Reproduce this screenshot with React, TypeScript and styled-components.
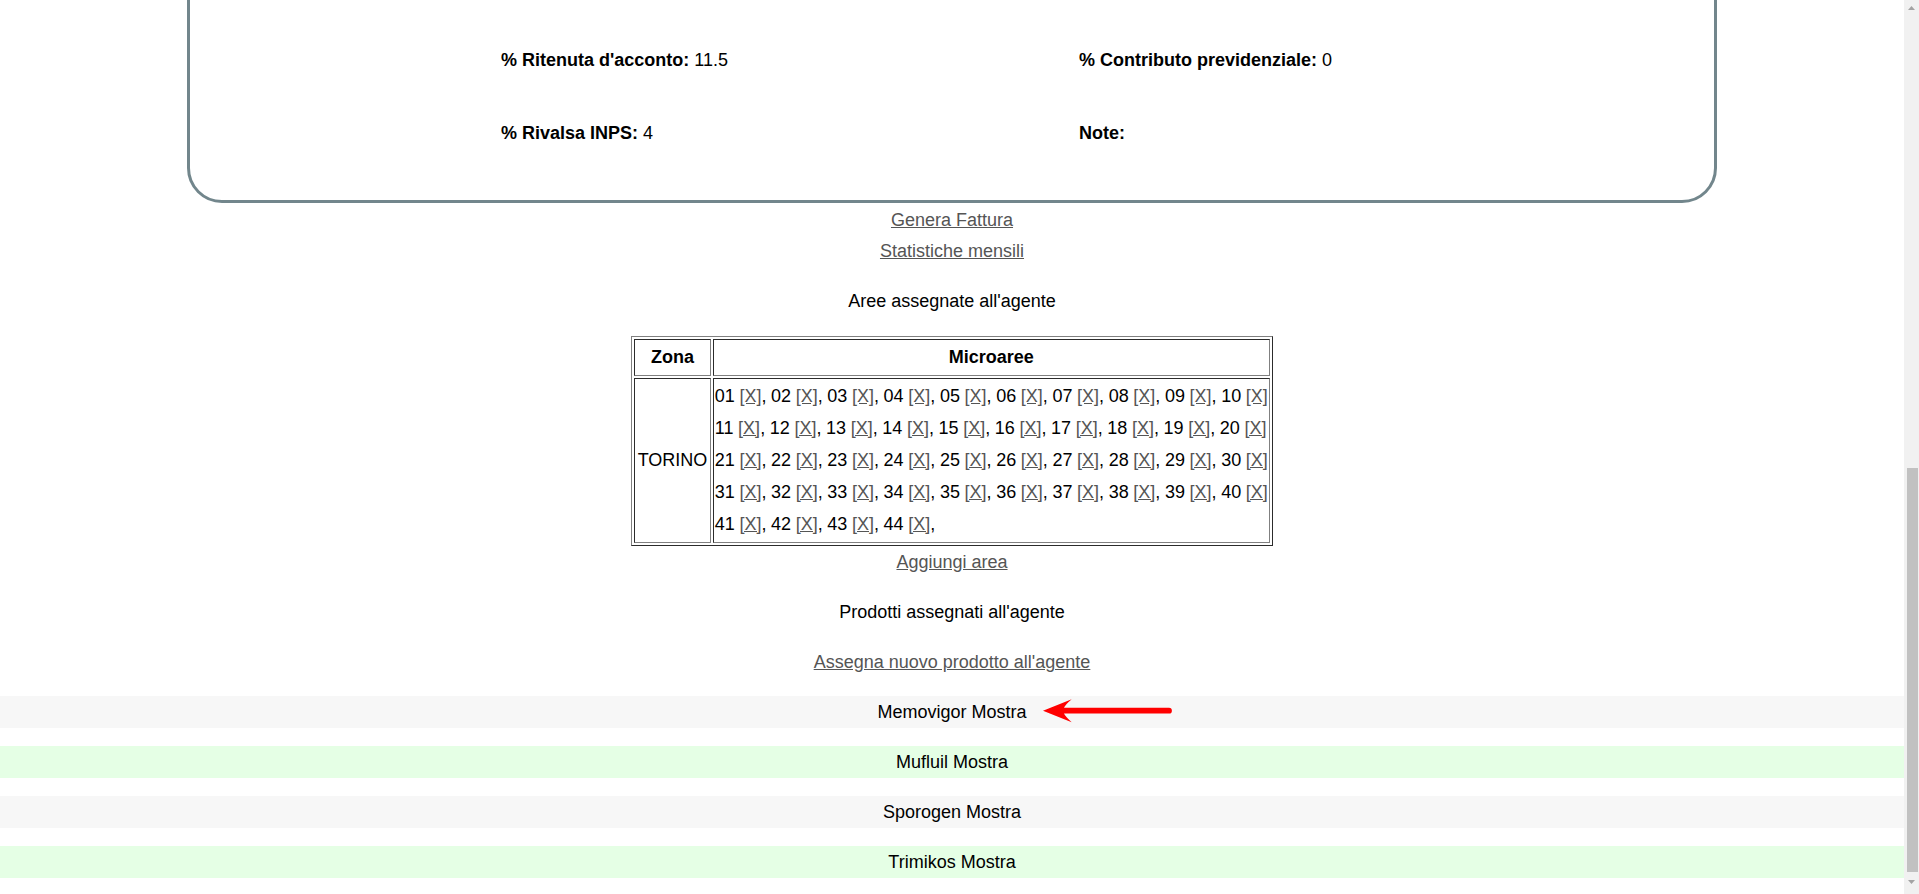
import React from 'react';
import styled, { createGlobalStyle } from 'styled-components';

const GlobalStyle = createGlobalStyle`
  html, body {
    margin: 0;
    padding: 0;
    background: #ffffff;
  }
  body {
    font-family: "Liberation Sans", Arial, sans-serif;
    font-size: 18px;
    color: #000000;
    overflow: hidden;
  }
`;

const Page = styled.div`
  display: flex;
  height: 100vh;
  overflow: hidden;
`;

const Main = styled.main`
  flex: 1;
  min-width: 0;
  display: flex;
  flex-direction: column;
  justify-content: flex-end;
  padding-bottom: 16px;
  overflow: hidden;
  & > * {
    flex-shrink: 0;
  }
`;

const AgentCard = styled.section`
  box-sizing: content-box;
  width: 80%;
  margin: 0 auto;
  border: 3px solid #72868c;
  border-radius: 35px;
  padding: 80px 0 30.5px;
`;

const FieldGrid = styled.div`
  width: 60%;
  margin: 0 auto;
  display: grid;
  grid-template-columns: 578px 1fr;
`;

const Field = styled.div`
  padding: 26px 0 26px 6px;
  line-height: 20.7px;
  white-space: nowrap;
`;

const FieldLabel = styled.b`
  font-weight: bold;
`;

const LinkStack = styled.div<{ $top?: number }>`
  display: flex;
  flex-direction: column;
  align-items: center;
  margin-top: ${(p) => p.$top ?? 0}px;
`;

const TextLink = styled.a`
  color: #555555;
  text-decoration: underline;
  line-height: 31px;
`;

const SectionTitle = styled.p`
  margin: 24px 0;
  line-height: 21px;
  text-align: center;
`;

const ZoneTable = styled.table`
  margin: 0 auto;
  border: 1px outset #808080;
  border-spacing: 2px;
  font-size: 18px;
  line-height: 31.8px;
`;

const HeadCell = styled.th`
  border: 1px inset #808080;
  padding: 1.5px 1px;
  font-weight: bold;
  text-align: center;
`;

const ZoneCell = styled.td`
  border: 1px inset #808080;
  padding: 2.4px 2.5px 1.6px;
  text-align: left;
  vertical-align: middle;
  white-space: nowrap;
`;

const AreaCell = styled.td`
  border: 1px inset #808080;
  padding: 2.4px 1px 1.6px;
  text-align: left;
  vertical-align: middle;
  white-space: nowrap;
  word-spacing: -0.4px;
`;

const RemoveLink = styled.a`
  color: #555555;
  text-decoration: underline;
`;

const ProductList = styled.div`
  display: flex;
  flex-direction: column;
  gap: 18px;
  margin-top: 17.7px;
`;

const ProductRow = styled.div<{ $tone: 'gray' | 'green' }>`
  position: relative;
  height: 32px;
  line-height: 32px;
  text-align: center;
  background: ${(p) => (p.$tone === 'green' ? '#e5ffe5' : '#f7f7f7')};
`;

const Pointer = styled.svg`
  position: absolute;
  left: calc(50% + 90px);
  top: 3px;
`;

const ScrollTrack = styled.div`
  flex: none;
  width: 15px;
  background: #f1f1f1;
  display: flex;
  flex-direction: column;
`;

const ScrollButton = styled.div<{ $end?: boolean }>`
  height: 15px;
  display: flex;
  justify-content: center;
  align-items: ${(p) => (p.$end ? 'flex-start' : 'center')};
  padding-top: ${(p) => (p.$end ? '1px' : '0')};
  box-sizing: border-box;
`;

const ScrollThumb = styled.div`
  margin: auto 1px 7px 3px;
  height: 404px;
  background: #c1c1c1;
`;

const areaCodes = Array.from({ length: 44 }, (_, i) => String(i + 1).padStart(2, '0'));
const areaLines = [0, 1, 2, 3, 4].map((r) => areaCodes.slice(r * 10, r * 10 + 10));

const products: { name: string; tone: 'gray' | 'green'; marked?: boolean }[] = [
  { name: 'Memovigor', tone: 'gray', marked: true },
  { name: 'Mufluil', tone: 'green' },
  { name: 'Sporogen', tone: 'gray' },
  { name: 'Trimikos', tone: 'green' },
];

function RedArrow() {
  return (
    <Pointer width="132" height="24" viewBox="0 0 132 24" aria-hidden="true">
      <path
        d="M1 11.7 L29.7 0.3 Q23 6 22 8.8 L127 8.8 A2.9 2.9 0 0 1 127 14.6 L22 14.6 Q23 17.4 29.7 23.3 Z"
        fill="#ff0000"
      />
    </Pointer>
  );
}

export default function App() {
  return (
    <>
      <GlobalStyle />
      <Page>
        <Main>
          <AgentCard>
            <FieldGrid>
              <Field>
                <FieldLabel>% Ritenuta d'acconto:</FieldLabel> 11.5
              </Field>
              <Field>
                <FieldLabel>% Contributo previdenziale:</FieldLabel> 0
              </Field>
              <Field>
                <FieldLabel>% Rivalsa INPS:</FieldLabel> 4
              </Field>
              <Field>
                <FieldLabel>Note:</FieldLabel>
              </Field>
            </FieldGrid>
          </AgentCard>

          <LinkStack $top={2}>
            <TextLink href="#">Genera Fattura</TextLink>
            <TextLink href="#">Statistiche mensili</TextLink>
          </LinkStack>

          <SectionTitle>Aree assegnate all'agente</SectionTitle>

          <ZoneTable>
            <tbody>
              <tr>
                <HeadCell>Zona</HeadCell>
                <HeadCell>Microaree</HeadCell>
              </tr>
              <tr>
                <ZoneCell>TORINO</ZoneCell>
                <AreaCell>
                  {areaLines.map((line, li) => (
                    <React.Fragment key={li}>
                      {line.map((code, i) => (
                        <React.Fragment key={code}>
                          {code}{' '}
                          <RemoveLink href="#">[X]</RemoveLink>
                          {i < line.length - 1 || li === areaLines.length - 1 ? ', ' : ''}
                        </React.Fragment>
                      ))}
                      {li < areaLines.length - 1 && <br />}
                    </React.Fragment>
                  ))}
                </AreaCell>
              </tr>
            </tbody>
          </ZoneTable>

          <LinkStack $top={1.3}>
            <TextLink href="#">Aggiungi area</TextLink>
          </LinkStack>

          <SectionTitle>Prodotti assegnati all'agente</SectionTitle>

          <LinkStack>
            <TextLink href="#">Assegna nuovo prodotto all'agente</TextLink>
          </LinkStack>

          <ProductList>
            {products.map((p) => (
              <ProductRow key={p.name} $tone={p.tone}>
                {p.name} Mostra
                {p.marked && <RedArrow />}
              </ProductRow>
            ))}
          </ProductList>
        </Main>

        <ScrollTrack>
          <ScrollButton>
            <svg width="7" height="4" viewBox="0 0 7 4" aria-hidden="true">
              <path d="M0 4 L3.5 0 L7 4 Z" fill="#a3a3a3" />
            </svg>
          </ScrollButton>
          <ScrollThumb />
          <ScrollButton $end>
            <svg width="7" height="4" viewBox="0 0 7 4" aria-hidden="true">
              <path d="M0 0 L7 0 L3.5 4 Z" fill="#a3a3a3" />
            </svg>
          </ScrollButton>
        </ScrollTrack>
      </Page>
    </>
  );
}
